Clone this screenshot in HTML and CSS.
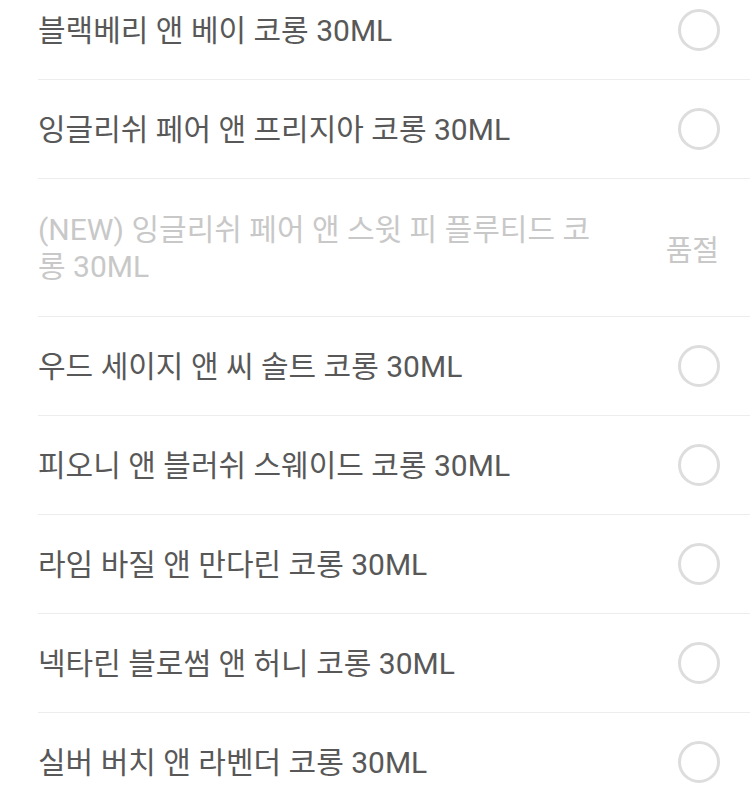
FILE: index.html
```html
<!DOCTYPE html>
<html lang="ko">
<head>
<meta charset="utf-8">
<link rel="stylesheet" href="styles.css">
</head>
<body>
<ul class="list">
  <li class="row"><span class="name">블랙베리 앤 베이 코롱 30ML</span><span class="slot"><span class="radio"></span></span></li>
  <li class="row"><span class="name">잉글리쉬 페어 앤 프리지아 코롱 30ML</span><span class="slot"><span class="radio"></span></span></li>
  <li class="row disabled"><span class="name">(NEW) 잉글리쉬 페어 앤 스윗 피 플루티드 코롱 30ML</span><span class="slot"><span class="soldout">품절</span></span></li>
  <li class="row"><span class="name">우드 세이지 앤 씨 솔트 코롱 30ML</span><span class="slot"><span class="radio"></span></span></li>
  <li class="row"><span class="name">피오니 앤 블러쉬 스웨이드 코롱 30ML</span><span class="slot"><span class="radio"></span></span></li>
  <li class="row"><span class="name">라임 바질 앤 만다린 코롱 30ML</span><span class="slot"><span class="radio"></span></span></li>
  <li class="row"><span class="name">넥타린 블로썸 앤 허니 코롱 30ML</span><span class="slot"><span class="radio"></span></span></li>
  <li class="row"><span class="name">실버 버치 앤 라벤더 코롱 30ML</span><span class="slot"><span class="radio"></span></span></li>
</ul>
</body>
</html>
```
FILE: styles.css
```css
html, body {
  margin: 0;
  padding: 0;
  background: #ffffff;
  overflow: hidden;
}
body {
  font-family: Roboto, "Noto Sans CJK KR", sans-serif;
  color: #585858;
}
.list {
  list-style: none;
  margin: -19px 0 0 0;
  padding: 0;
}
.row {
  display: flex;
  align-items: center;
  min-height: 99px;
  margin-left: 38px;
  padding-right: 30px;
  border-bottom: 1px solid #ededed;
  box-sizing: border-box;
}
.row.disabled {
  min-height: 138px;
}
.name {
  flex: 1;
  font-size: 30px;
  line-height: 37px;
  padding-right: 40px;
}
.disabled .name {
  color: #c8c8c8;
}
.slot {
  width: 80px;
  display: flex;
  justify-content: flex-end;
  align-items: center;
}
.radio {
  width: 42px;
  height: 42px;
  box-sizing: border-box;
  border: 3px solid #dddddd;
  border-radius: 50%;
}
.soldout {
  font-size: 29px;
  color: #c8c8c8;
  margin-right: 1px;
}
```
